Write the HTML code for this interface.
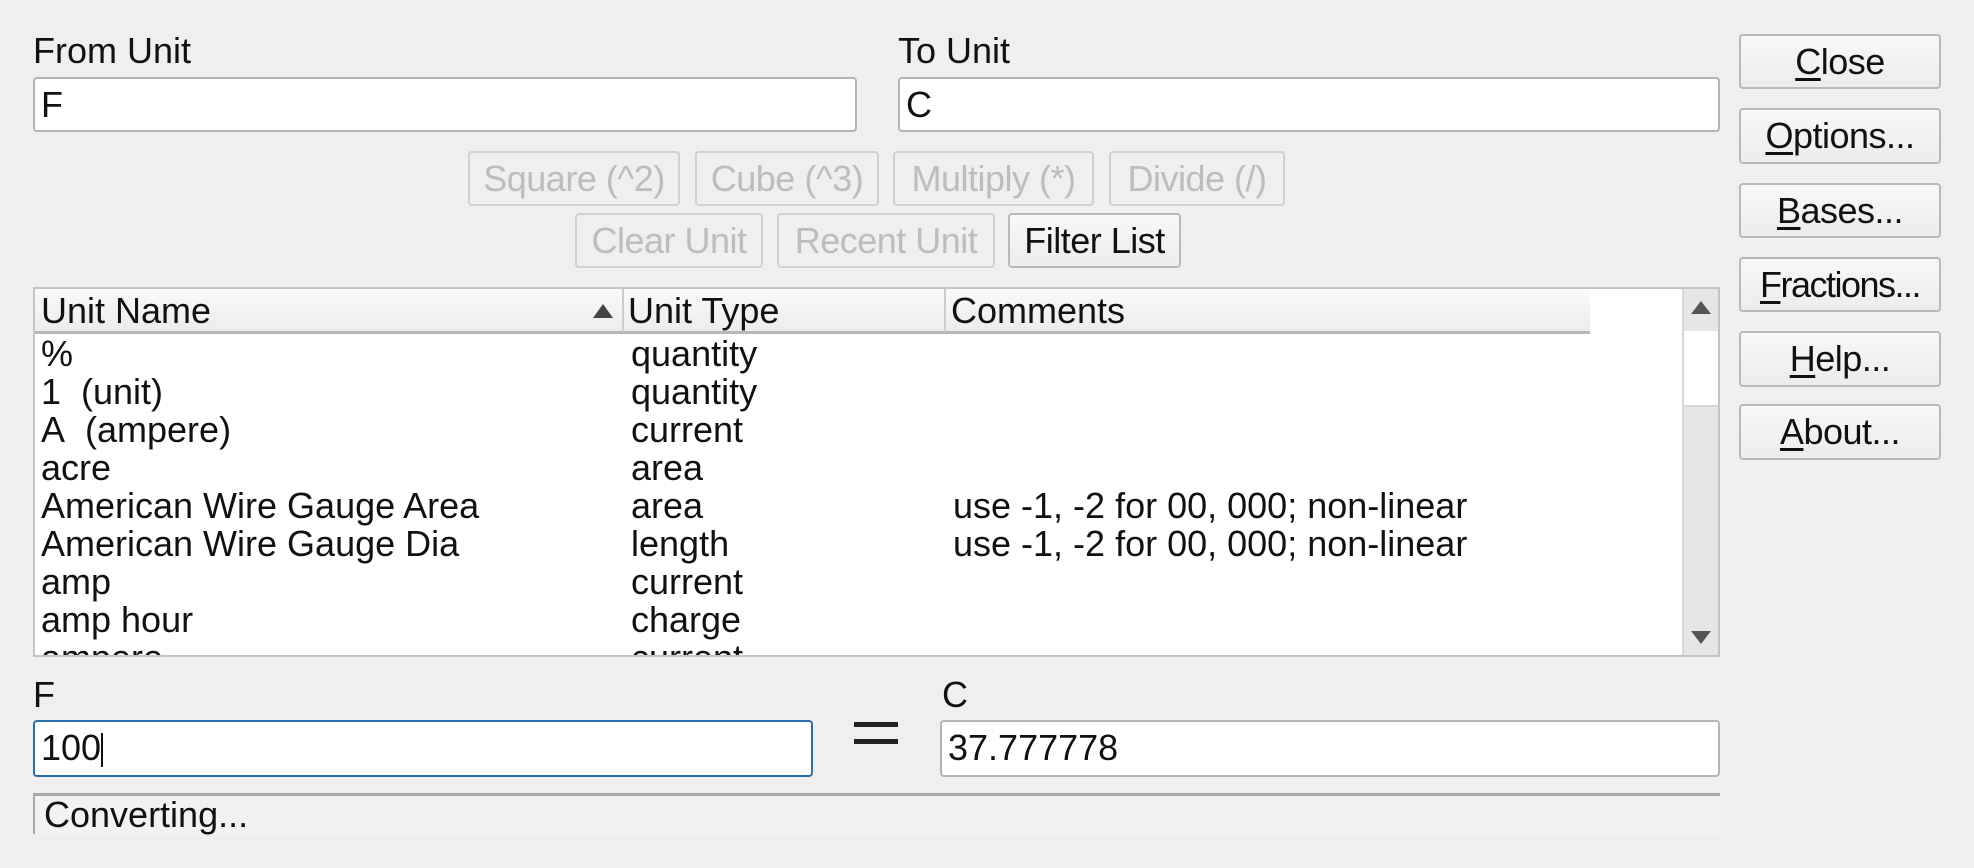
<!DOCTYPE html>
<html><head><meta charset="utf-8"><style>
*{box-sizing:border-box;margin:0;padding:0}
body{width:1974px;height:868px;background:#efefef;font-family:"Liberation Sans","Noto Sans CJK JP",sans-serif;font-size:36px;color:#111;position:relative;overflow:hidden}
.a{position:absolute;white-space:nowrap}
.field{position:absolute;background:#fff;border:2px solid #b4b4b4;border-radius:4px;padding-left:6px;line-height:51px}
.btn{position:absolute;border:2px solid #b9b9b9;border-radius:4px;background:linear-gradient(#f8f8f8,#ececec);text-align:center;line-height:51px;color:#111;letter-spacing:-0.5px}
.dis{color:#bdbdbd;border-color:#d0d0d0;background:#efefef}
u{text-decoration:underline;text-underline-offset:4px}
.row{position:absolute;left:0;height:38px;line-height:38px;white-space:nowrap}
</style></head><body>
<div class="a" style="left:33px;top:30px">From Unit</div>
<div class="field" style="left:33px;top:77px;width:824px;height:55px">F</div>
<div class="a" style="left:898px;top:30px">To Unit</div>
<div class="field" style="left:898px;top:77px;width:822px;height:55px">C</div>

<div class="btn dis" style="left:468px;top:151px;width:212px;height:55px">Square (^2)</div>
<div class="btn dis" style="left:695px;top:151px;width:184px;height:55px">Cube (^3)</div>
<div class="btn dis" style="left:893px;top:151px;width:201px;height:55px">Multiply (*)</div>
<div class="btn dis" style="left:1109px;top:151px;width:176px;height:55px">Divide (/)</div>
<div class="btn dis" style="left:575px;top:213px;width:188px;height:55px">Clear Unit</div>
<div class="btn dis" style="left:777px;top:213px;width:218px;height:55px">Recent Unit</div>
<div class="btn" style="left:1008px;top:213px;width:173px;height:55px">Filter List</div>

<div class="btn" style="left:1739px;top:34px;width:202px;height:55px"><u>C</u>lose</div>
<div class="btn" style="left:1739px;top:108px;width:202px;height:56px"><u>O</u>ptions...</div>
<div class="btn" style="left:1739px;top:183px;width:202px;height:55px"><u>B</u>ases...</div>
<div class="btn" style="left:1739px;top:257px;width:202px;height:55px;letter-spacing:-1.5px"><u>F</u>ractions...</div>
<div class="btn" style="left:1739px;top:331px;width:202px;height:56px"><u>H</u>elp...</div>
<div class="btn" style="left:1739px;top:404px;width:202px;height:56px"><u>A</u>bout...</div>

<div style="position:absolute;left:33px;top:287px;width:1687px;height:370px;background:#fff;border:2px solid #c4c4c4;overflow:hidden">
 <div style="position:absolute;left:0;top:0;width:1555px;height:45px;background:linear-gradient(#fafafa,#ececec);border-bottom:3px solid #b8b8b8"></div>
 <div style="position:absolute;left:587px;top:0;width:2px;height:43px;background:#ccc"></div>
 <div style="position:absolute;left:909px;top:0;width:2px;height:43px;background:#ccc"></div>
 <div class="a" style="left:6px;top:1px;line-height:42px">Unit Name</div>
 <div class="a" style="left:558px;top:15px;width:0;height:0;border-left:10px solid transparent;border-right:10px solid transparent;border-bottom:14px solid #444"></div>
 <div class="a" style="left:593px;top:1px;line-height:42px">Unit Type</div>
 <div class="a" style="left:916px;top:1px;line-height:42px">Comments</div>
 <div style="position:absolute;left:1647px;top:0;width:38px;height:370px;background:#e6e6e6;border-left:2px solid #d8d8d8"></div>
 <div style="position:absolute;left:1649px;top:42px;width:36px;height:76px;background:#fff;border-bottom:2px solid #d8d8d8"></div>
 <div class="a" style="left:1656px;top:12px;border-left:10px solid transparent;border-right:10px solid transparent;border-bottom:13px solid #555;width:0;height:0"></div>
 <div class="a" style="left:1656px;top:342px;border-left:10px solid transparent;border-right:10px solid transparent;border-top:13px solid #555;width:0;height:0"></div>
 <div style="position:absolute;left:0;top:46px;width:1640px">
  <div class="row" style="top:0"><span class="a" style="left:6px">%</span><span class="a" style="left:596px">quantity</span></div>
  <div class="row" style="top:38px"><span class="a" style="left:6px">1&nbsp;&nbsp;(unit)</span><span class="a" style="left:596px">quantity</span></div>
  <div class="row" style="top:76px"><span class="a" style="left:6px">A&nbsp;&nbsp;(ampere)</span><span class="a" style="left:596px">current</span></div>
  <div class="row" style="top:114px"><span class="a" style="left:6px">acre</span><span class="a" style="left:596px">area</span></div>
  <div class="row" style="top:152px"><span class="a" style="left:6px">American Wire Gauge Area</span><span class="a" style="left:596px">area</span><span class="a" style="left:918px">use -1, -2 for 00, 000; non-linear</span></div>
  <div class="row" style="top:190px"><span class="a" style="left:6px">American Wire Gauge Dia</span><span class="a" style="left:596px">length</span><span class="a" style="left:918px">use -1, -2 for 00, 000; non-linear</span></div>
  <div class="row" style="top:228px"><span class="a" style="left:6px">amp</span><span class="a" style="left:596px">current</span></div>
  <div class="row" style="top:266px"><span class="a" style="left:6px">amp hour</span><span class="a" style="left:596px">charge</span></div>
  <div class="row" style="top:304px"><span class="a" style="left:6px">ampere</span><span class="a" style="left:596px">current</span></div>
 </div>
</div>

<div class="a" style="left:33px;top:674px">F</div>
<div class="field" style="left:33px;top:720px;width:780px;height:57px;border-color:#2a6fa8">100<span style="display:inline-block;width:2px;height:34px;background:#111;vertical-align:middle"></span></div>
<div class="a" style="left:854px;top:722px;width:44px;height:5px;background:#222"></div>
<div class="a" style="left:854px;top:739px;width:44px;height:5px;background:#222"></div>
<div class="a" style="left:942px;top:674px">C</div>
<div class="field" style="left:940px;top:720px;width:780px;height:57px">37.777778</div>

<div class="a" style="left:33px;top:793px;width:1687px;height:41px;background:#f2f2f2;border-top:3px solid #a8a8a8;border-left:2px solid #a8a8a8;padding-left:9px;line-height:38px">Converting...</div>
</body></html>
